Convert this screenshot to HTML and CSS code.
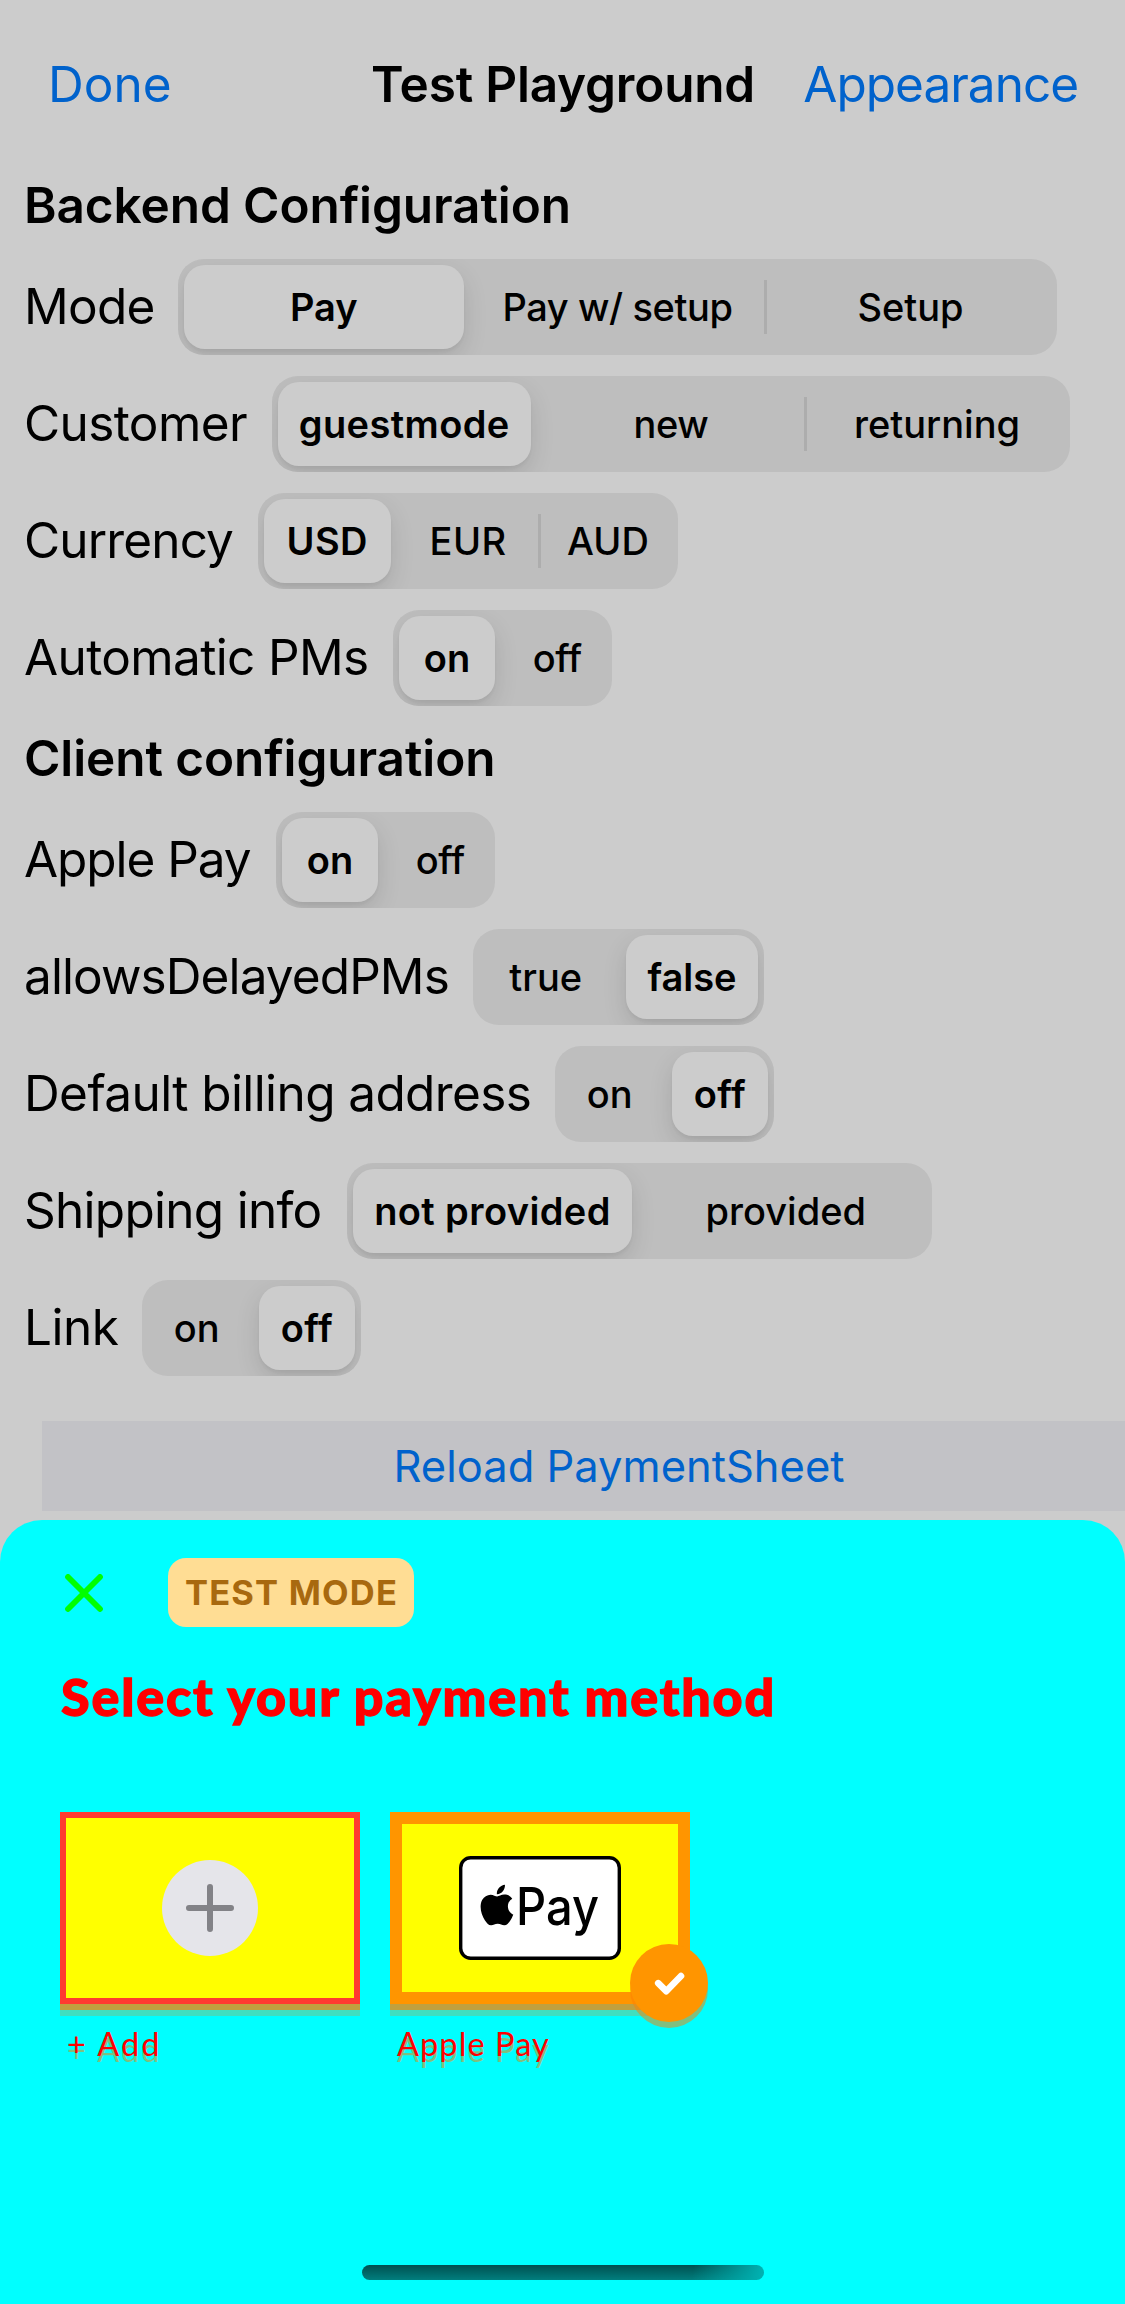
FILE: index.html
```
<!DOCTYPE html>
<html lang="en">
<head>
<meta charset="utf-8">
<title>Test Playground</title>
<link rel="stylesheet" href="styles.css">
</head>
<body>
<div class="screen">
  <header class="nav">
    <a class="nav-link">Done</a>
    <h1 class="nav-title">Test Playground</h1>
    <a class="nav-link nav-link-end">Appearance</a>
  </header>

  <main class="settings">
    <h2 class="heading">Backend Configuration</h2>
    <div class="row row-mode">
      <span class="label">Mode</span>
      <div class="segmented"><span class="segment selected first">Pay</span><span class="segment snug">Pay w/ setup</span><span class="segment divided">Setup</span></div>
    </div>
    <div class="row row-customer">
      <span class="label">Customer</span>
      <div class="segmented"><span class="segment selected first wide">guestmode</span><span class="segment snug">new</span><span class="segment divided">returning</span></div>
    </div>
    <div class="row row-currency">
      <span class="label">Currency</span>
      <div class="segmented"><span class="segment selected first wide">USD</span><span class="segment wide">EUR</span><span class="segment divided">AUD</span></div>
    </div>
    <div class="row row-automatic">
      <span class="label">Automatic PMs</span>
      <div class="segmented"><span class="segment selected first">on</span><span class="segment snug">off</span></div>
    </div>
    <h2 class="heading">Client configuration</h2>
    <div class="row row-apple-pay">
      <span class="label">Apple Pay</span>
      <div class="segmented"><span class="segment selected first">on</span><span class="segment snug">off</span></div>
    </div>
    <div class="row row-delayed">
      <span class="label">allowsDelayedPMs</span>
      <div class="segmented"><span class="segment">true</span><span class="segment selected last">false</span></div>
    </div>
    <div class="row row-billing">
      <span class="label">Default billing address</span>
      <div class="segmented"><span class="segment">on</span><span class="segment selected last wide">off</span></div>
    </div>
    <div class="row row-shipping">
      <span class="label">Shipping info</span>
      <div class="segmented"><span class="segment selected first wide">not provided</span><span class="segment">provided</span></div>
    </div>
    <div class="row row-link">
      <span class="label">Link</span>
      <div class="segmented"><span class="segment">on</span><span class="segment selected last wide">off</span></div>
    </div>
  </main>

  <div class="reload">Reload PaymentSheet</div>

  <section class="sheet">
    <div class="sheet-bar">
      <svg class="close" viewBox="0 0 38 38"><path d="M3 3L35 35M35 3L3 35"/></svg>
      <span class="test-mode">TEST MODE</span>
    </div>
    <h2 class="sheet-title">Select your payment method</h2>
    <div class="methods">
      <div class="method">
        <div class="card">
          <svg class="add" viewBox="0 0 96 96"><circle cx="48" cy="48" r="48"/><path d="M27 48H69M48 27V69"/></svg>
        </div>
        <span class="method-name add-name">+ Add</span>
      </div>
      <div class="method">
        <div class="card card-selected">
          <svg class="apple-pay" viewBox="0 0 162 104">
            <rect x="1.7" y="1.7" width="158.6" height="100.6" rx="10" fill="#fff" stroke="#000" stroke-width="3.4"/>
            <path transform="translate(17.9 28.8) scale(1.67 1.69)" d="M12.152 6.896c-.948 0-2.415-1.078-3.96-1.04-2.04.027-3.91 1.183-4.961 3.014-2.117 3.675-.546 9.103 1.519 12.09 1.013 1.454 2.208 3.09 3.792 3.039 1.52-.065 2.09-.987 3.935-.987 1.831 0 2.35.987 3.96.948 1.637-.026 2.676-1.48 3.676-2.948 1.156-1.688 1.636-3.325 1.662-3.415-.039-.013-3.182-1.221-3.22-4.857-.026-3.04 2.48-4.494 2.597-4.559-1.429-2.09-3.623-2.324-4.39-2.376-2-.156-3.675 1.09-4.61 1.09zM15.53 3.83c.843-1.012 1.4-2.427 1.245-3.83-1.207.052-2.662.805-3.532 1.818-.78.896-1.454 2.338-1.273 3.714 1.338.104 2.715-.688 3.559-1.701"/>
            <text x="57" y="69" textLength="83" lengthAdjust="spacingAndGlyphs">Pay</text>
          </svg>
          <span class="check"><svg viewBox="0 0 78 78"><path d="M28.2 39.2L36.2 47.2L51 32"/></svg></span>
        </div>
        <span class="method-name">Apple Pay</span>
      </div>
    </div>
    <div class="home-indicator"></div>
  </section>
</div>
</body>
</html>
```
FILE: styles.css
```
* { box-sizing: border-box; }

body {
  margin: 0;
  background: #ccc;
  color: #000;
  font-family: Inter, "Liberation Sans", sans-serif;
}

.screen {
  display: flex;
  flex-direction: column;
  width: 1125px;
  height: 2304px;
  overflow: hidden;
}

/* Navigation bar */
.nav {
  display: grid;
  grid-template-columns: 323px 1fr 323px;
  align-items: center;
  height: 168px;
  padding: 0 49px 0 48px;
  font-size: 49.5px;
  line-height: 60px;
  white-space: nowrap;
}
.nav-link { color: #0062cc; }
.nav-link-end { justify-self: end; letter-spacing: -1px; }
.nav-title {
  margin: 0;
  font-size: inherit;
  font-weight: 600;
  letter-spacing: -.2px;
}

/* Settings list */
.settings {
  display: flex;
  flex-direction: column;
  gap: 21px;
  margin-top: 6px;
  padding-left: 24px;
}
.heading {
  height: 64px;
  margin: 0;
  font-size: 49.5px;
  font-weight: 600;
  line-height: 62px;
  letter-spacing: -.1px;
}
.row { display: grid; height: 96px; }
.label {
  font-size: 49.5px;
  line-height: 94px;
  white-space: nowrap;
}

.row-mode { grid-template-columns: 154px 879px; letter-spacing: -.7px; }
.row-customer { grid-template-columns: 248px 798px; letter-spacing: -.6px; }
.row-currency { grid-template-columns: 234px 420px; letter-spacing: -.85px; }
.row-automatic { grid-template-columns: 369px 219px; letter-spacing: -.64px; }
.row-apple-pay { grid-template-columns: 252px 219px; letter-spacing: -1.05px; }
.row-delayed { grid-template-columns: 449px 291px; letter-spacing: -.9px; }
.row-billing { grid-template-columns: 531px 219px; letter-spacing: -.6px; }
.row-shipping { grid-template-columns: 323px 585px; letter-spacing: -.72px; }
.row-link { grid-template-columns: 118px 219px; letter-spacing: -.5px; }

.segmented {
  display: grid;
  grid-auto-flow: column;
  grid-auto-columns: 1fr;
  overflow: hidden;
  border-radius: 26px;
  background: #bebebe;
  font-size: 38px;
  font-weight: 500;
  letter-spacing: 0;
}
.segment {
  display: flex;
  align-items: center;
  justify-content: center;
  white-space: nowrap;
}
.segment.snug { letter-spacing: -.4px; }
.segment.wide { letter-spacing: .4px; }
.segment.divided {
  background: linear-gradient(#adadad, #adadad) 0 50% / 3px 54px no-repeat;
}
.segment.selected {
  border-radius: 21px;
  background: #ccc;
  box-shadow: 0 9px 24px rgba(0, 0, 0, .12), 0 3px 3px rgba(0, 0, 0, .04);
  font-weight: 600;
}
.segment.first { margin: 6px 7.5px 6px 6px; }
.segment.last { margin: 6px 6px 6px 7.5px; }

.reload {
  height: 90px;
  margin: 45px 0 9px 42px;
  padding-left: 71px;
  background: #c2c2c6;
  color: #0062cc;
  font-size: 43.5px;
  line-height: 90px;
  text-align: center;
}

/* Payment sheet */
.sheet {
  display: flex;
  flex: 1;
  flex-direction: column;
  padding: 38px 60px 24px;
  border-radius: 42px 42px 0 0;
  background: #0ff;
  color: #f00;
  font-family: Lato, "Open Sans", sans-serif;
}
.sheet-bar {
  display: flex;
  align-items: center;
  gap: 65px;
  height: 69px;
  padding-left: 5px;
}
.close {
  width: 38px;
  height: 38px;
  fill: none;
  stroke: #0f0;
  stroke-width: 5.8;
  stroke-linecap: round;
}
.test-mode {
  width: 246px;
  padding-left: 1px;
  border-radius: 18px;
  background: #ffdd94;
  color: #a8690f;
  font: 700 34.5px/69px Inter, sans-serif;
  letter-spacing: 1.2px;
  text-align: center;
}
.sheet-title {
  margin: 37px 0 84px 1px;
  font-size: 52px;
  font-weight: 900;
  line-height: 64px;
  letter-spacing: 1.85px;
  white-space: nowrap;
  -webkit-text-stroke: 1.3px #f00;
}
.methods { display: flex; gap: 30px; }
.method { display: flex; flex-direction: column; width: 300px; }
.card {
  position: relative;
  display: flex;
  align-items: center;
  justify-content: center;
  height: 192px;
  border: 6px solid #ff3b30;
  background: #ff0;
  box-shadow: 0 6px rgba(255, 128, 0, .67), 0 12px rgba(255, 128, 0, .25);
}
.card-selected { border: 12px solid #ff9500; }
.add { width: 96px; height: 96px; fill: #e5e5ea; }
.add path { stroke: #828287; stroke-width: 6; stroke-linecap: round; }
.apple-pay { width: 162px; height: 104px; }
.apple-pay text { font: 500 52px Inter, sans-serif; }
.check {
  position: absolute;
  right: -30px;
  bottom: -30px;
  width: 78px;
  height: 78px;
  border-radius: 50%;
  background: #ff9500;
  box-shadow: 0 6px rgba(255, 128, 0, .5);
}
.check path {
  fill: none;
  stroke: #fff;
  stroke-width: 6.6;
  stroke-linecap: round;
  stroke-linejoin: round;
}
.method-name {
  margin: 20px 0 0 7px;
  font-size: 32.5px;
  font-weight: 400;
  line-height: 40px;
  letter-spacing: 1.1px;
  text-shadow: 0 6px rgba(255, 128, 0, .5);
}
.add-name { letter-spacing: 2.1px; }

.home-indicator {
  align-self: center;
  width: 402px;
  height: 15px;
  margin-top: auto;
  border-radius: 8px;
  background:
    linear-gradient(100deg, rgba(0, 176, 176, 0) 82%, #00b0b0 99%),
    linear-gradient(#005050, #007e7e);
}
```
